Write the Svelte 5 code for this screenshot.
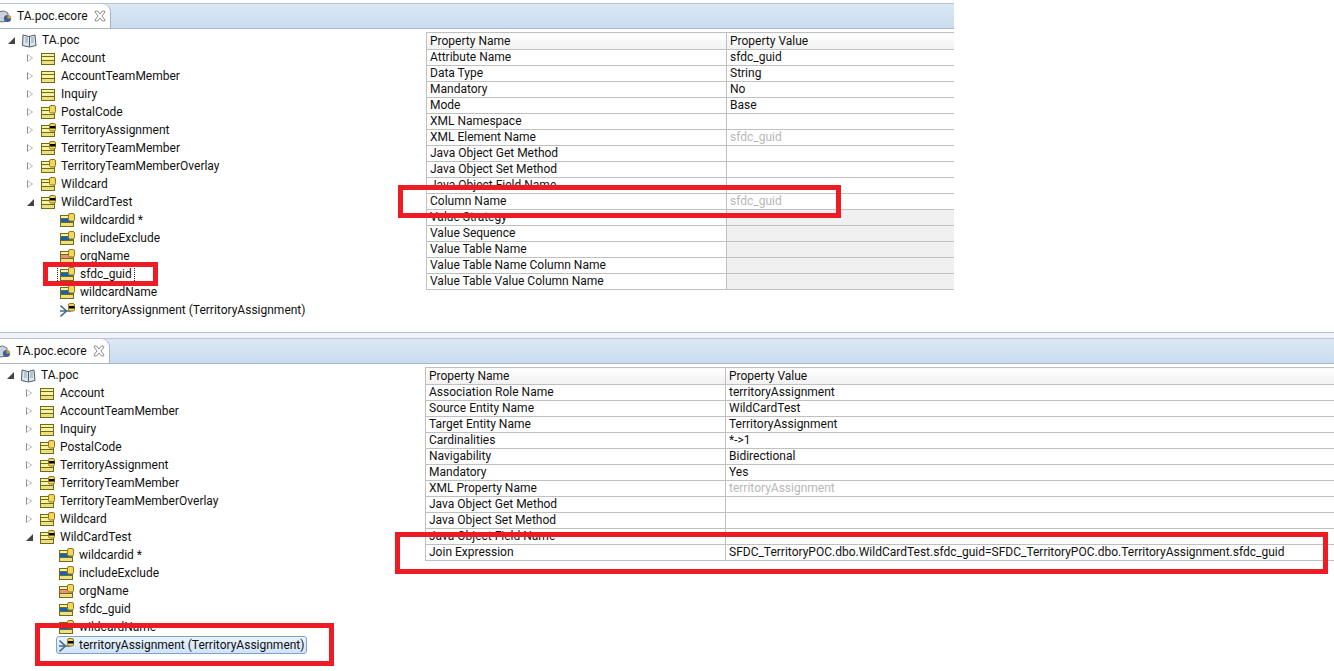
<script>
	const entities = [
		{ name: 'Account', icon: 'plain' },
		{ name: 'AccountTeamMember', icon: 'plain' },
		{ name: 'Inquiry', icon: 'plain' },
		{ name: 'PostalCode', icon: 'cyl' },
		{ name: 'TerritoryAssignment', icon: 'key' },
		{ name: 'TerritoryTeamMember', icon: 'key' },
		{ name: 'TerritoryTeamMemberOverlay', icon: 'cyl' },
		{ name: 'Wildcard', icon: 'cyl' },
		{ name: 'WildCardTest', icon: 'key', open: true }
	];
	const attributes = [
		{ name: 'wildcardid *', band: '#0f5fc4' },
		{ name: 'includeExclude', band: '#0f5fc4' },
		{ name: 'orgName', band: '#f28a8a' },
		{ name: 'sfdc_guid', band: '#0f5fc4' },
		{ name: 'wildcardName', band: '#0f5fc4' }
	];

	const attributeRows = [
		['Attribute Name', 'sfdc_guid'],
		['Data Type', 'String'],
		['Mandatory', 'No'],
		['Mode', 'Base'],
		['XML Namespace', ''],
		['XML Element Name', 'sfdc_guid', 'muted'],
		['Java Object Get Method', ''],
		['Java Object Set Method', ''],
		['Java Object Field Name', ''],
		['Column Name', 'sfdc_guid', 'muted'],
		['Value Strategy', '', 'grey'],
		['Value Sequence', '', 'grey'],
		['Value Table Name', '', 'grey'],
		['Value Table Name Column Name', '', 'grey'],
		['Value Table Value Column Name', '', 'grey']
	];
	const assocRows = [
		['Association Role Name', 'territoryAssignment'],
		['Source Entity Name', 'WildCardTest'],
		['Target Entity Name', 'TerritoryAssignment'],
		['Cardinalities', '*->1'],
		['Navigability', 'Bidirectional'],
		['Mandatory', 'Yes'],
		['XML Property Name', 'territoryAssignment', 'muted'],
		['Java Object Get Method', ''],
		['Java Object Set Method', ''],
		['Java Object Field Name', ''],
		['Join Expression', 'SFDC_TerritoryPOC.dbo.WildCardTest.sfdc_guid=SFDC_TerritoryPOC.dbo.TerritoryAssignment.sfdc_guid']
	];
</script>

{#snippet tableIcon(kind, band)}
	<svg class="icon" viewBox="0 0 15 15" width="15" height="15">
		<rect x="0.5" y="2.5" width="13" height="11" fill="#f8f2a6" stroke="#6f6d10"/>
		<rect x="1" y="5" width="12" height="1" fill="#6f6d10"/>
		<rect x="1" y="9" width="12" height="1" fill="#6f6d10"/>
		<rect x="1" y="10" width="12" height="3" fill="#ecdf84"/>
		{#if band}
			<rect x="1" y="6" width="12" height="3" fill={band}/>
		{/if}
		{#if kind !== 'plain'}
			<rect x="8.5" y="0.5" width="6" height="7.5" rx="1.5" fill="#f5d65c" stroke="#8d7a20"/>
			{#if kind === 'key'}
				<rect x="9" y="3" width="5.5" height="2.5" fill="#000"/>
			{/if}
		{/if}
	</svg>
{/snippet}

{#snippet assocIcon()}
	<svg class="icon" viewBox="0 0 15 15" width="15" height="15">
		<path d="M0.5 2.5 L6.5 8 L0.5 13.5 M0 8 H11" fill="none" stroke="#4a6a85" stroke-width="1.6"/>
		<rect x="8.5" y="0.5" width="6" height="7.5" rx="1.5" fill="#f5d65c" stroke="#8d7a20"/>
		<rect x="9" y="3" width="5.5" height="2.5" fill="#000"/>
	</svg>
{/snippet}

{#snippet tabBar()}
	<div class="tabbar">
		<div class="tab">
			<svg class="file-icon" viewBox="0 0 12 14" width="12" height="14">
				<path d="M-3 3 L4 2 L8 4 L8 12 L1 13 L-3 10 Z" fill="#c9d3dc" stroke="#68727e"/>
				<circle cx="7.5" cy="9.5" r="3.6" fill="#3f5f93"/>
				<path d="M7.5 9.5 V6 A3.6 3.6 0 0 1 11 9.5 Z" fill="#e49b2f"/>
			</svg>
			<span>TA.poc.ecore</span>
			<svg class="close" viewBox="0 0 12 12" width="12" height="12">
				<path d="M1.5 1 L3.5 1 L6 4 L8.5 1 L10.5 1 L11 2 L8 6 L11 10 L10.5 11 L8.5 11 L6 8 L3.5 11 L1.5 11 L1 10 L4 6 L1 2 Z" fill="#fff" stroke="#8a8a8a"/>
			</svg>
		</div>
	</div>
{/snippet}

{#snippet tree(focus, selected)}
	<div class="tree">
		<div class="row root">
			<span class="arrow open"></span>
			<svg class="icon" viewBox="0 0 15 15" width="15" height="15">
				<path d="M1 2 L7 3.5 L13 2 L14 12.5 L7.5 14 L0.5 12.5 Z" fill="#dfe7ee" stroke="#4d5a66"/>
				<path d="M7.5 3.5 V13.5" stroke="#4d5a66"/>
				<path d="M3 5 H6 M3 7 H6 M3 9 H6 M9 5 H12 M9 7 H12 M9 9 H12" stroke="#8ba4b8"/>
			</svg>
			<span class="label">TA.poc</span>
		</div>
		{#each entities as e}
			<div class="row lvl1">
				<span class="arrow" class:open={e.open}></span>
				{@render tableIcon(e.icon)}
				<span class="label">{e.name}</span>
			</div>
		{/each}
		{#each attributes as a}
			<div class="row lvl2">
				<div class="item" class:focus={focus && a.name === 'sfdc_guid'}>
					{@render tableIcon('cyl', a.band)}
					<span class="label">{a.name}</span>
				</div>
			</div>
		{/each}
		<div class="row lvl2">
			<div class="item" class:selected>
				{@render assocIcon()}
				<span class="label">territoryAssignment (TerritoryAssignment)</span>
			</div>
		</div>
	</div>
{/snippet}

{#snippet props(rows)}
	<table>
		<thead>
			<tr><th>Property Name</th><th>Property Value</th></tr>
		</thead>
		<tbody>
			{#each rows as [k, v, kind]}
				<tr>
					<td>{k}</td>
					<td class:muted={kind === 'muted'} class:grey={kind === 'grey'}>{v}</td>
				</tr>
			{/each}
		</tbody>
	</table>
{/snippet}

<div class="page">
	<section class="panel first">
		{@render tabBar()}
		<div class="body">
			{@render tree(true, false)}
			<div class="props">{@render props(attributeRows)}</div>
		</div>
		<div class="mark m1"></div>
		<div class="mark m2"></div>
	</section>
	<section class="panel second">
		{@render tabBar()}
		<div class="body">
			{@render tree(false, true)}
			<div class="props">{@render props(assocRows)}</div>
		</div>
		<div class="mark m3"></div>
		<div class="mark m4"></div>
	</section>
</div>

<style>
	:global(body) {
		margin: 0;
		background: #fff;
	}

	.page {
		width: 1334px;
		height: 671px;
		overflow: hidden;
		font: 12px/16px Roboto, sans-serif;
		color: #111;
	}

	.panel {
		position: relative;
		overflow: hidden;
	}

	.first {
		width: 954px;
		height: 332px;
	}

	.second {
		width: 1335px;
		height: 339px;
		margin-left: -1px;
		border-top: 1px solid #b4bbd0;
		box-sizing: border-box;
		background: linear-gradient(#f1f3f9 6px, #fff 6px);
	}

	.tabbar {
		height: 24px;
		margin-top: 3px;
		border-top: 1px solid #b9c2da;
		border-bottom: 1px solid #a9b6c8;
		background: linear-gradient(#dbe8f4, #c9dcee);
	}

	.second .tabbar {
		margin-top: 5px;
	}

	.tab {
		display: flex;
		align-items: center;
		width: 110px;
		height: 24px;
		background: #fff;
		border-top-right-radius: 8px;
		box-shadow: 1px 0 0 #a9b6c8;
	}

	.tab span {
		margin-left: 5px;
	}

	.file-icon {
		flex: none;
	}

	.close {
		margin-left: 6px;
		flex: none;
	}

	.body {
		display: flex;
	}

	.tree {
		width: 426px;
		flex: none;
		padding-top: 2px;
	}

	.row {
		display: flex;
		align-items: center;
		height: 18px;
		white-space: nowrap;
	}

	.root {
		padding-left: 6px;
	}

	.lvl1 {
		padding-left: 25px;
	}

	.lvl2 {
		padding-left: 60px;
	}

	.arrow {
		flex: none;
		position: relative;
		width: 8px;
		height: 9px;
		margin: 0 6px 0 2px;
	}

	.arrow::before {
		content: "";
		position: absolute;
		left: 0;
		top: 0;
		border-left: 6px solid #8f8f8f;
		border-top: 4.5px solid transparent;
		border-bottom: 4.5px solid transparent;
	}

	.arrow::after {
		content: "";
		position: absolute;
		left: 1px;
		top: 1.5px;
		border-left: 4px solid #fff;
		border-top: 3px solid transparent;
		border-bottom: 3px solid transparent;
	}

	.arrow.open::before {
		top: 1px;
		border-left: 7px solid transparent;
		border-top: 0;
		border-bottom: 7px solid #444;
	}

	.arrow.open::after {
		display: none;
	}

	.icon {
		flex: none;
	}

	.label {
		margin-left: 5px;
		padding-right: 1px;
	}

	.item {
		display: flex;
		align-items: center;
		height: 18px;
		box-sizing: border-box;
	}

	.item.focus {
		margin-left: -3px;
		padding: 0 1px 0 2px;
		border-left: 1px dotted #222;
		border-right: 1px dotted #222;
	}

	.item.selected {
		margin-left: -3px;
		padding: 0 1px 0 2px;
		border: 1px solid #7da2ce;
		border-radius: 3px;
		background: linear-gradient(#ebf4fd, #cfe3fa);
	}

	.props {
		flex: 1;
		min-width: 0;
		padding-top: 3px;
		overflow: hidden;
	}

	table {
		width: calc(100% + 2px);
		border-collapse: collapse;
		table-layout: fixed;
	}

	th, td {
		height: 15px;
		padding: 0 3px;
		border: 1px solid #c0c0c0;
		font-weight: normal;
		text-align: left;
		white-space: nowrap;
		overflow: hidden;
		line-height: 15px;
	}

	th {
		height: 16px;
		background: linear-gradient(#fff, #f1f1f1);
	}

	th:first-child, td:first-child {
		width: 293px;
	}

	td.muted {
		color: #b8b8b8;
	}

	td.grey {
		background: #f0f0f0;
	}

	.mark {
		position: absolute;
		border: 5px solid #ed1c24;
		box-sizing: border-box;
	}

	.m1 {
		left: 43px;
		top: 262px;
		width: 115px;
		height: 24px;
	}

	.m2 {
		left: 398px;
		top: 185px;
		width: 443px;
		height: 33px;
	}

	.m3 {
		left: 36px;
		top: 290px;
		width: 299px;
		height: 43px;
	}

	.m4 {
		left: 396px;
		top: 199px;
		width: 933px;
		height: 42px;
	}
</style>
